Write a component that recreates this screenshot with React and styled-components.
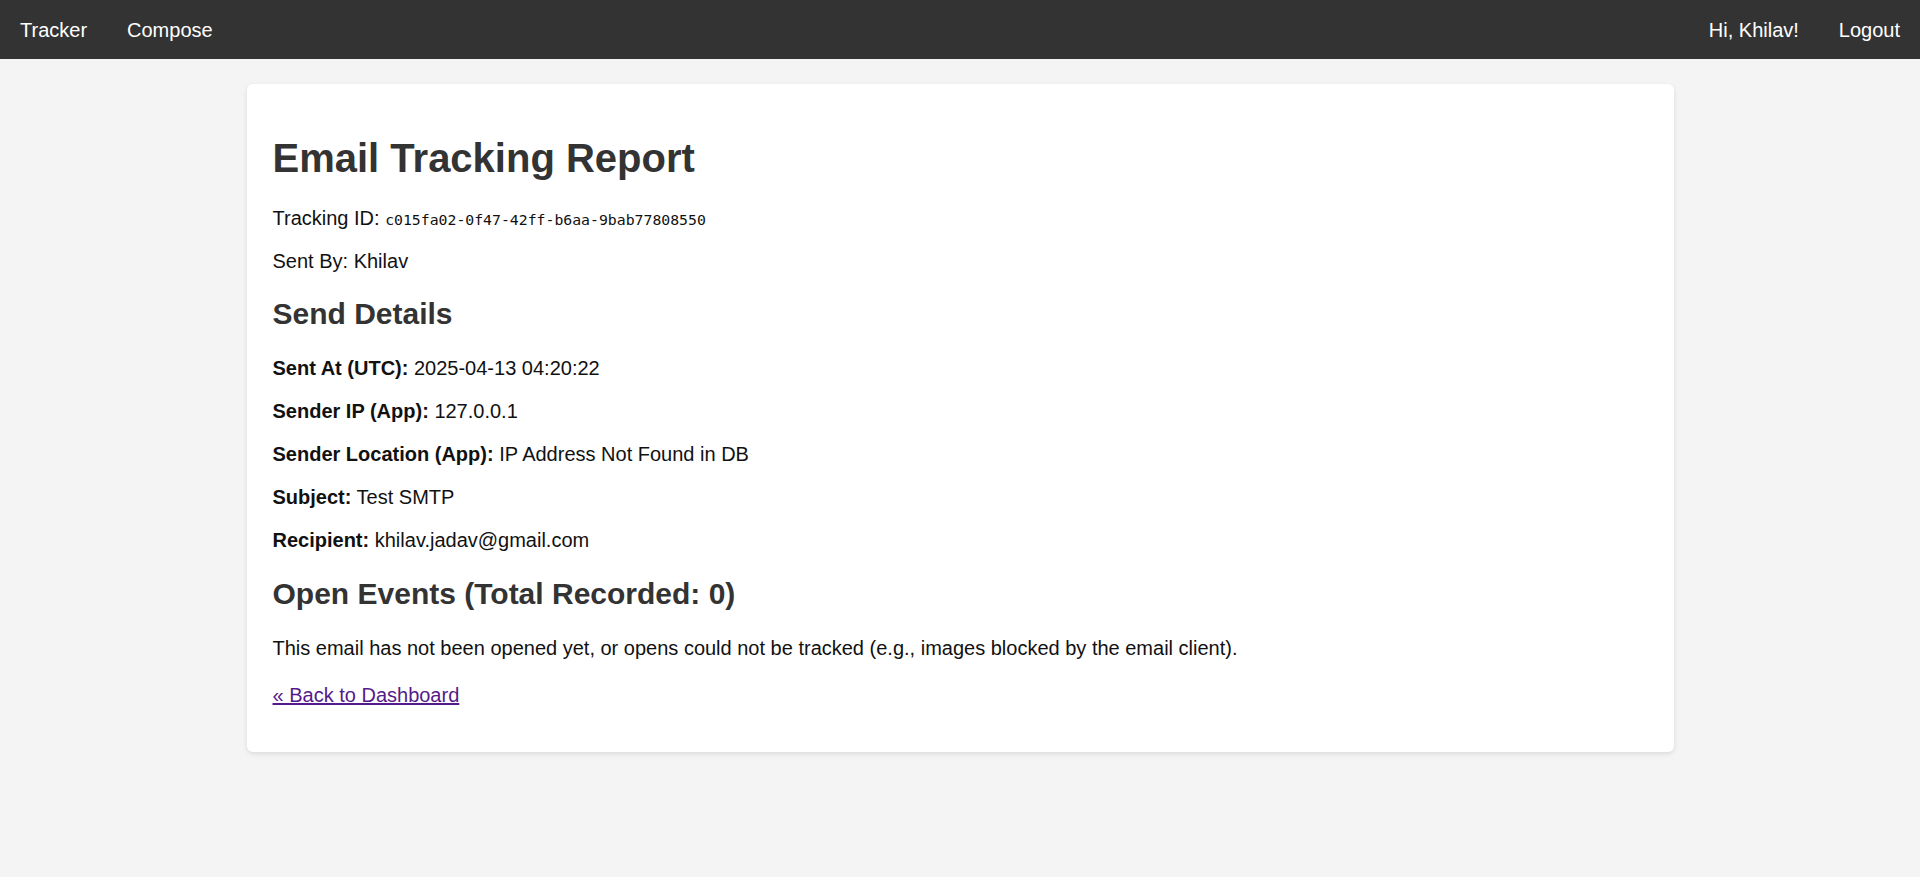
import React from 'react'
import styled, { createGlobalStyle } from 'styled-components'

const GlobalStyle = createGlobalStyle`
    html, body {
        margin: 0;
        padding: 0;
        background: #f4f4f4;
        font-family: "Liberation Sans", Arial, sans-serif;
        color: #111;
    }
`;

const NavBar = styled.nav`
    display: flex;
    justify-content: space-between;
    align-items: center;
    height: 59px;
    background-color: #333;
`;

const NavGroup = styled.div`
    display: flex;
    align-items: center;
`;

const NavLink = styled.a`
    display: block;
    padding: 1px 20px 0;
    color: #fff;
    font-size: 20px;
    line-height: 23px;
    text-decoration: none;
    cursor: pointer;
`;

const Card = styled.main`
    max-width: 1427px;
    margin: 25px auto;
    padding: 30px 26px 26px;
    box-sizing: border-box;
    background: #fff;
    border-radius: 6px;
    box-shadow: 0 2px 5px rgba(0, 0, 0, 0.1);
`;

const Title = styled.h1`
    margin: 23px 0 27px;
    font-size: 40px;
    line-height: 42px;
    font-weight: bold;
    color: #333;
`;

const SectionTitle = styled.h2`
    margin: ${props => props.top}px 0 26px;
    font-size: 30px;
    line-height: 32px;
    font-weight: bold;
    color: #333;
`;

const Line = styled.p`
    margin: ${props => props.top || 18}px 0 18px;
    font-size: 20px;
    line-height: 25px;
`;

const Label = styled.strong`
    font-weight: bold;
`;

const Code = styled.code`
    font-family: "DejaVu Sans Mono", "Liberation Mono", monospace;
    font-size: 14.8px;
    line-height: 1;
`;

const BackLink = styled.a`
    color: #551a8b;
    text-decoration: underline;
    cursor: pointer;
`;

const details = [
    ['Sent At (UTC):', '2025-04-13 04:20:22'],
    ['Sender IP (App):', '127.0.0.1'],
    ['Sender Location (App):', 'IP Address Not Found in DB'],
    ['Subject:', 'Test SMTP'],
    ['Recipient:', 'khilav.jadav@gmail.com'],
];

export default function App() {
    return (
        <>
            <GlobalStyle />
            <NavBar>
                <NavGroup>
                    <NavLink>Tracker</NavLink>
                    <NavLink>Compose</NavLink>
                </NavGroup>
                <NavGroup>
                    <NavLink>Hi, Khilav!</NavLink>
                    <NavLink>Logout</NavLink>
                </NavGroup>
            </NavBar>
            <Card>
                <Title>Email Tracking Report</Title>
                <Line>Tracking ID: <Code>c015fa02-0f47-42ff-b6aa-9bab77808550</Code></Line>
                <Line>Sent By: Khilav</Line>

                <SectionTitle top={24}>Send Details</SectionTitle>
                {details.map(([label, value]) => (
                    <Line key={label}><Label>{label}</Label> {value}</Line>
                ))}

                <SectionTitle top={25}>Open Events (Total Recorded: 0)</SectionTitle>
                <Line>This email has not been opened yet, or opens could not be tracked (e.g., images blocked by the email client).</Line>
                <Line top={22}><BackLink>« Back to Dashboard</BackLink></Line>
            </Card>
        </>
    )
}
